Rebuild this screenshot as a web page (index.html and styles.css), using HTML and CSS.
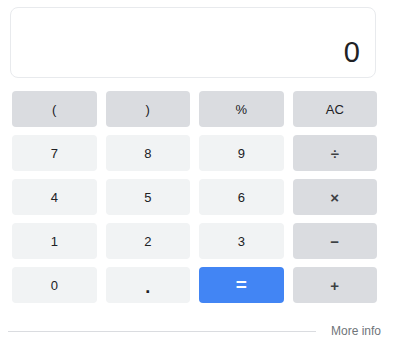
FILE: index.html
```html
<!DOCTYPE html>
<html lang="en">
<head>
	<meta charset="UTF-8">
	<title>Calculator</title>
	<link rel="stylesheet" href="styles.css">
</head>
<body>
	<div class="calc">
		<div class="screen">
			<span class="result">0</span>
		</div>
		<div class="keys">
			<button class="key dark">(</button>
			<button class="key dark">)</button>
			<button class="key dark">%</button>
			<button class="key dark">AC</button>

			<button class="key">7</button>
			<button class="key">8</button>
			<button class="key">9</button>
			<button class="key dark op">÷</button>

			<button class="key">4</button>
			<button class="key">5</button>
			<button class="key">6</button>
			<button class="key dark op">×</button>

			<button class="key">1</button>
			<button class="key">2</button>
			<button class="key">3</button>
			<button class="key dark op">−</button>

			<button class="key">0</button>
			<button class="key dot">.</button>
			<button class="key blue">=</button>
			<button class="key dark op">+</button>
		</div>
		<div class="foot">
			<span class="line"></span>
			<a href="#" class="more">More info</a>
		</div>
	</div>
</body>
</html>
```

FILE: styles.css
```css
*{
	margin: 0;
	padding: 0;
	box-sizing: border-box;
}
body{
	background: #fff;
	font-family: "Liberation Sans", Arial, sans-serif;
	color: #202124;
}
.calc{
	width: 397px;
	padding: 7px 0 0 10px;
}
.screen{
	width: 366px;
	height: 71px;
	border: 1px solid #e8eaed;
	border-radius: 8px;
	display: flex;
	justify-content: flex-end;
	align-items: flex-end;
	padding: 0 15px 8px 0;
}
.result{
	font-size: 29px;
	line-height: 34px;
	color: #202124;
}
.keys{
	width: 365px;
	margin: 13px 0 0 2px;
	display: grid;
	grid-template-columns: repeat(4, 1fr);
	grid-auto-rows: 36px;
	gap: 8px 9px;
}
.key{
	border: none;
	border-radius: 4px;
	background: #f1f3f4;
	font-family: "Liberation Sans", Arial, sans-serif;
	font-size: 13px;
	color: #202124;
	cursor: pointer;
}
.key.dark{
	background: #dadce0;
}
.key.op{
	font-size: 15px;
	font-weight: bold;
	color: #3c4043;
}
.key.dot{
	font-size: 18px;
	font-weight: bold;
	padding-top: 4px;
}
.key.blue{
	background: #4285f4;
	color: #fff;
	font-size: 19px;
	font-weight: bold;
}
.foot{
	display: flex;
	align-items: center;
	margin: 18px 0 0 -2px;
	height: 20px;
}
.line{
	width: 308px;
	height: 1px;
	background: #dadce0;
}
.more{
	margin-left: 15px;
	font-size: 12px;
	color: #70757a;
	text-decoration: none;
}
```
